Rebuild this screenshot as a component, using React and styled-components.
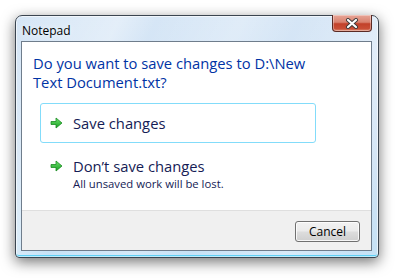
import React from 'react';
import styled, { createGlobalStyle } from 'styled-components';

const GlobalStyle = createGlobalStyle`
  html, body {
    margin: 0;
    padding: 0;
    background: #ffffff;
  }
  body {
    font-family: "Open Sans", "Noto Sans", sans-serif;
  }
`;

const Page = styled.div`
  width: 398px;
  height: 278px;
  padding: 15px 0 0 15px;
  box-sizing: border-box;
`;

const Window = styled.div`
  width: 364px;
  height: 243px;
  box-sizing: border-box;
  border: 1px solid #3b4550;
  border-radius: 7px 7px 4px 4px;
  background:
    linear-gradient(115deg, rgba(255,255,255,0) 0%, rgba(255,255,255,0.35) 22%, rgba(255,255,255,0) 30%,
      rgba(255,255,255,0.25) 48%, rgba(255,255,255,0) 60%, rgba(255,255,255,0.3) 80%, rgba(255,255,255,0) 95%),
    linear-gradient(180deg, #d6e6f6 0%, #cfe2f4 60%, #c6e2f6 100%);
  box-shadow: 0 4px 14px rgba(0, 0, 0, 0.55), inset 0 0 0 1px rgba(255, 255, 255, 0.6), inset 0 -2px 0 #5fd0f5;
  padding: 0 6px 6px 5px;
  display: flex;
  flex-direction: column;
`;

const TitleBar = styled.div`
  height: 25px;
  flex: none;
  display: flex;
  align-items: flex-start;
  justify-content: space-between;
`;

const Caption = styled.span`
  font-family: "Open Sans", sans-serif;
  font-size: 12px;
  color: #000000;
  margin: 6px 0 0 1px;
  text-shadow: 0 0 6px rgba(255, 255, 255, 0.9);
`;

const CloseButton = styled.div`
  width: 40px;
  height: 17px;
  margin-top: -1px;
  box-sizing: border-box;
  border: 1px solid #5a2a24;
  border-top: none;
  border-radius: 0 0 4px 4px;
  background: linear-gradient(180deg, #e7a597 0%, #d9826f 45%, #c2412a 55%, #c94e36 85%, #dd8a70 100%);
  box-shadow: inset 0 0 0 1px rgba(255, 255, 255, 0.35);
  display: flex;
  align-items: center;
  justify-content: center;
`;

const Client = styled.div`
  flex: 1;
  min-height: 0;
  border: 1px solid #6f7d8c;
  background: #ffffff;
  display: flex;
  flex-direction: column;
`;

const Content = styled.div`
  flex: 1;
  padding: 12px 11px 0 11px;
`;

const Instruction = styled.div`
  font-size: 14.75px;
  line-height: 19px;
  color: #0033a5;
  margin-bottom: 11px;
  max-width: 290px;
`;

const LinkList = styled.div`
  display: flex;
  flex-direction: column;
  gap: 3px;
  margin-left: 7px;
  width: 276px;
`;

const CommandLink = styled.div`
  box-sizing: border-box;
  min-height: 40px;
  border: 1px solid ${p => (p.$hover ? '#83dcfa' : 'transparent')};
  border-radius: 3px;
  display: flex;
  align-items: flex-start;
  padding: 10px 8px 8px 9px;
  gap: 10px;
`;

const ArrowIcon = styled.svg`
  width: 13px;
  height: 12px;
  flex: none;
  margin-top: 3px;
`;

const LinkText = styled.div`
  display: flex;
  flex-direction: column;
`;

const LinkLabel = styled.span`
  font-size: 14.75px;
  line-height: 19px;
  color: #151c55;
`;

const LinkNote = styled.span`
  font-size: 11.3px;
  line-height: 15px;
  color: #151c55;
`;

const Footer = styled.div`
  height: 40px;
  flex: none;
  box-sizing: border-box;
  border-top: 1px solid #dfdfdf;
  background: #f0f0f0;
  display: flex;
  justify-content: flex-end;
  align-items: flex-start;
  padding: 10px 11px 0 0;
`;

const Button = styled.button`
  width: 65px;
  height: 21px;
  box-sizing: border-box;
  border: 1px solid #707070;
  border-radius: 3px;
  background: linear-gradient(180deg, #f2f2f2 0%, #ebebeb 48%, #dddddd 52%, #cfcfcf 100%);
  box-shadow: inset 0 0 0 1px rgba(255, 255, 255, 0.8);
  font-family: "Open Sans", sans-serif;
  font-size: 12px;
  color: #000000;
  padding: 0;
  line-height: 18px;
`;

const Arrow = () => (
  <ArrowIcon viewBox="0 0 13 12">
    <defs>
      <linearGradient id="ag" x1="0" y1="0" x2="0" y2="1">
        <stop offset="0" stopColor="#6fe06f" />
        <stop offset="1" stopColor="#16a020" />
      </linearGradient>
    </defs>
    <path
      d="M1 4.5 H6 V1 L12 6 L6 11 V7.5 H1 Z"
      fill="url(#ag)"
      stroke="#1b8a22"
      strokeWidth="0.8"
      strokeLinejoin="round"
    />
  </ArrowIcon>
);

export default function App() {
  return (
    <Page>
      <GlobalStyle />
      <Window>
        <TitleBar>
          <Caption>Notepad</Caption>
          <CloseButton>
            <svg width="14" height="11" viewBox="0 0 14 11">
              <path d="M3 2 L11 9 M11 2 L3 9" stroke="#3a3a3a" strokeWidth="4" strokeLinecap="round" />
              <path d="M3 2 L11 9 M11 2 L3 9" stroke="#ffffff" strokeWidth="2.2" strokeLinecap="round" />
            </svg>
          </CloseButton>
        </TitleBar>
        <Client>
          <Content>
            <Instruction>Do you want to save changes to D:\New Text Document.txt?</Instruction>
            <LinkList>
              <CommandLink $hover>
                <Arrow />
                <LinkText>
                  <LinkLabel>Save changes</LinkLabel>
                </LinkText>
              </CommandLink>
              <CommandLink>
                <Arrow />
                <LinkText>
                  <LinkLabel>Don’t save changes</LinkLabel>
                  <LinkNote>All unsaved work will be lost.</LinkNote>
                </LinkText>
              </CommandLink>
            </LinkList>
          </Content>
          <Footer>
            <Button>Cancel</Button>
          </Footer>
        </Client>
      </Window>
    </Page>
  );
}
